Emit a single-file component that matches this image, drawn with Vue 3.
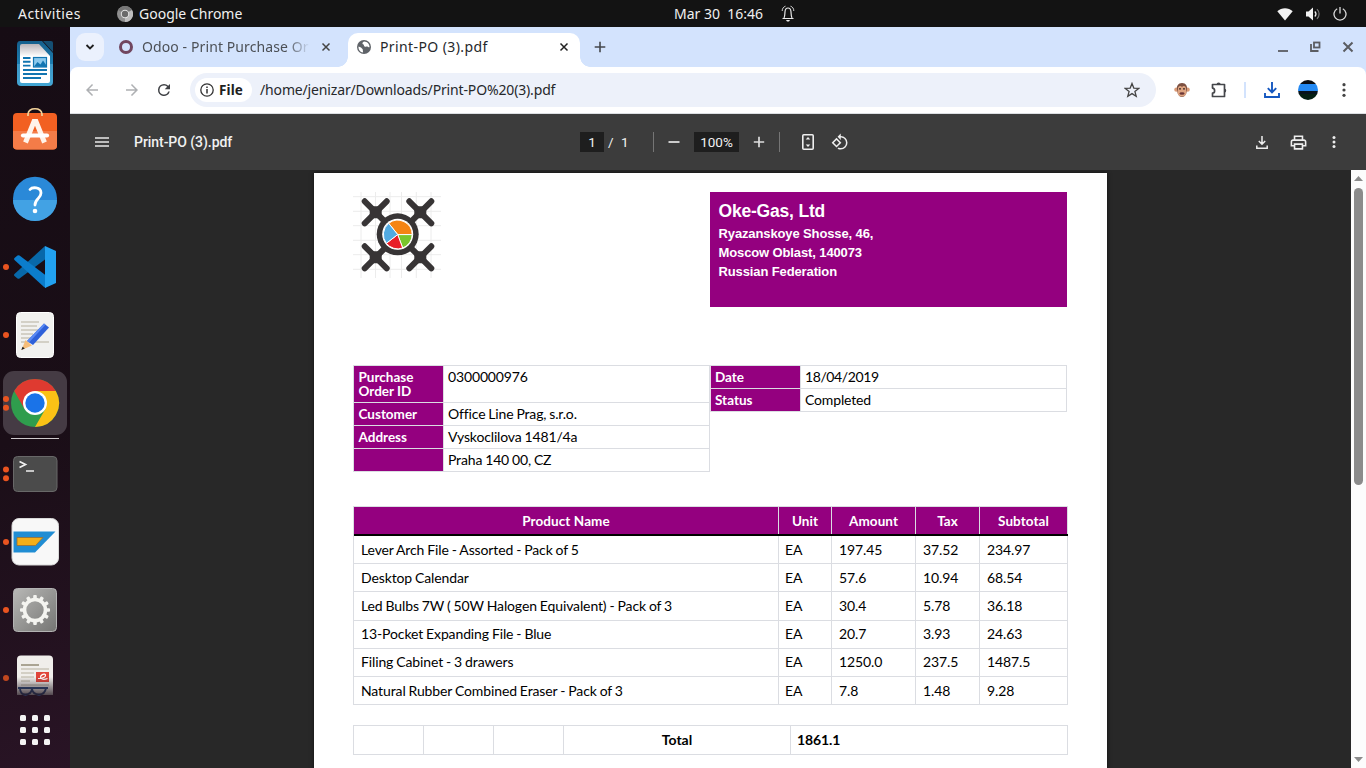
<script setup>
const orderInfo = [
  { label: 'Purchase Order ID', value: '0300000976', tall: true },
  { label: 'Customer', value: 'Office Line Prag, s.r.o.' },
  { label: 'Address', value: 'Vyskoclilova 1481/4a' },
  { label: '', value: 'Praha 140 00, CZ' },
]
const statusInfo = [
  { label: 'Date', value: '18/04/2019', date: true },
  { label: 'Status', value: 'Completed' },
]
const columns = ['Product Name', 'Unit', 'Amount', 'Tax', 'Subtotal']
const products = [
  ['Lever Arch File - Assorted - Pack of 5', 'EA', '197.45', '37.52', '234.97'],
  ['Desktop Calendar', 'EA', '57.6', '10.94', '68.54'],
  ['Led Bulbs 7W ( 50W Halogen Equivalent) - Pack of 3', 'EA', '30.4', '5.78', '36.18'],
  ['13-Pocket Expanding File - Blue', 'EA', '20.7', '3.93', '24.63'],
  ['Filing Cabinet - 3 drawers', 'EA', '1250.0', '237.5', '1487.5'],
  ['Natural Rubber Combined Eraser - Pack of 3', 'EA', '7.8', '1.48', '9.28'],
]
const gearTeeth = Array.from({ length: 12 }, (_, i) => i * 30)
</script>

<template>
  <div class="desktop">
    <header class="topbar">
      <span class="activities">Activities</span>
      <svg class="top-chrome" width="16" height="16" viewBox="0 0 16 16">
        <circle cx="8" cy="8" r="8" fill="#8f8f8f" />
        <path d="M8 8 1.100 4A8 8 0 0 1 15 4Z" fill="#777" />
        <path d="M8 8 15 4A8 8 0 0 1 8 16Z" fill="#bdbdbd" />
        <circle cx="8" cy="8" r="4.200" fill="#e4e4e4" />
        <circle cx="8" cy="8" r="3.200" fill="#6a6a6a" />
      </svg>
      <span class="app-name">Google Chrome</span>
      <span class="clock">Mar 30&nbsp; 16:46</span>
      <svg class="bell" width="14" height="17" viewBox="0 0 14 17" fill="none" stroke="#e8e8e8">
        <path d="M1.500 13.500h11M3 13c1-2 .8-4 1-6.300C4.200 4.200 5.300 3 7 3s2.800 1.200 3 3.700c.2 2.300 0 4.300 1 6.300" stroke-width="1.200" />
        <path d="M4.500 1.200C2.500 1.800 1.200 3.500 1.200 6M9.500 1.200c2 .6 3.300 2.300 3.300 4.800" stroke-width=".9" />
        <path d="M5 15h4l-1 1.500H6Z" fill="#eee" stroke="none" />
      </svg>
      <svg class="wifi" width="16" height="14" viewBox="0 0 16 14">
        <path d="M8 13.500.3 4.300C4.600.2 11.400.2 15.700 4.300Z" fill="#f2f2f2" />
      </svg>
      <svg class="volume" width="16" height="14" viewBox="0 0 16 14" fill="none">
        <path d="M1 4.500h2.500L8 .5v13L3.500 9.500H1Z" fill="#f2f2f2" />
        <path d="M9.800 4.500c1.300 1.400 1.300 3.600 0 5" stroke="#f2f2f2" stroke-width="1.300" />
        <path d="M12 2.200c2.800 2.800 2.800 6.800 0 9.600" stroke="#777" stroke-width="1.200" />
      </svg>
      <svg class="power" width="14" height="14" viewBox="0 0 14 14" fill="none" stroke="#dcdcdc" stroke-width="1.300">
        <path d="M4.200 1.800a6 6 0 1 0 5.600 0M7 0v6.500" />
      </svg>
    </header>

    <div class="body">
      <aside class="dock">
        <svg class="slot" viewBox="0 0 70 68">
          <defs>
            <linearGradient id="wr" x1="0" y1="0" x2="0" y2="1"><stop offset="0" stop-color="#155f8c" /><stop offset=".5" stop-color="#1d7db0" /><stop offset=".51" stop-color="#3d97c6" /><stop offset="1" stop-color="#43a6d4" /></linearGradient>
            <linearGradient id="wp" x1="0" y1="0" x2="0" y2="1"><stop offset="0" stop-color="#b9b4b9" /><stop offset=".32" stop-color="#fff" /></linearGradient>
          </defs>
          <path d="M20 12h22l11 12v29q0 4-4 4H21q-4 0-4-4V16q0-4 3-4Z" fill="url(#wr)" />
          <path d="M43 12h8q2 0 2 2v9Z" fill="#154f73" />
          <path d="M22 15h17l11 12v25q0 2-2 2H22q-2 0-2-2V17q0-2 2-2Z" fill="url(#wp)" />
          <path d="M23 29h7.500M23 32.800h7.500M23 36.600h7.500M23 41h24M23 45h24M23 49h18" stroke="#1275b1" stroke-width="1.900" />
          <rect x="33.500" y="28.500" width="13" height="9.500" fill="#8bc9ed" stroke="#1275b1" stroke-width="1.200" />
          <path d="m34 37.500 3.500-4.500 3 2.500 2.500-4 3.500 5v1.500Z" fill="#1275b1" />
        </svg>
        <svg class="slot" viewBox="0 0 70 68">
          <rect x="13" y="16" width="44" height="36.500" rx="4" fill="#f26022" />
          <path d="M13 34h44v14.500q0 4-4 4H17q-4 0-4-4Z" fill="#f47c48" />
          <path d="M28 19v-2c1-7 13-7 14 0v2" fill="none" stroke="#f4d49b" stroke-width="1.700" />
          <path d="m25.500 45.500 8.500-21h2l8.500 21" fill="none" stroke="#fff3ea" stroke-width="5" />
          <path d="M23 38.500h24" stroke="#fff" stroke-width="4.200" stroke-linecap="round" />
        </svg>
        <svg class="slot" viewBox="0 0 70 68">
          <circle cx="35" cy="33.700" r="22" fill="#2a89d8" />
          <path d="M13 35a22 21 0 0 0 44 0Z" fill="#42a2e4" />
          <path d="M30 24.500c2-2.500 11-3 11 3.500 0 5.500-6 5.500-6 12" fill="none" stroke="#fff" stroke-width="2.800" stroke-linecap="round" />
          <circle cx="35" cy="46" r="2.300" fill="#fff" />
        </svg>
        <svg class="slot" viewBox="0 0 70 68">
          <circle cx="6" cy="34" r="3" fill="#e95420" />
          <path d="M45 13 14.500 41q-1 1 0 2l3 2.500q1 .7 2 0L45 26.500Z" fill="#0868a9" />
          <path d="M14.500 27q-1-1 0-2l3-2.500q1-.7 2 0L46 42.500V55L44 54Z" fill="#0b7dcc" />
          <path d="M45 13 56 18v32l-11 5Z" fill="#22a1f0" />
        </svg>
        <svg class="slot" viewBox="0 0 70 68">
          <circle cx="6" cy="34" r="3" fill="#e95420" />
          <rect x="16.500" y="11.500" width="37" height="45" rx="4" fill="#f1f1ef" stroke="#fff" />
          <path d="M21 21h18M21 25h16M21 29h18M21 33h12M21 37h14M21 41h28" stroke="#c9c5b9" stroke-width="1.700" />
          <path d="m27 40 17-17.500 5 4L33 44Z" fill="#2e60d9" />
          <path d="m27 40 17-17.500 1.500 1.200L29 41.500Z" fill="#5a8af4" />
          <path d="m21.500 49 4-10 6.500 5.500Z" fill="#f6bd79" />
          <path d="m21.300 49 1.300-3.300 2.200 1.700Z" fill="#222" />
        </svg>
        <svg class="slot" viewBox="0 0 70 68">
          <rect x="3" y="2" width="64" height="64" rx="11" fill="#453b44" />
          <circle cx="6" cy="30" r="3" fill="#e95420" /><circle cx="6" cy="38.700" r="3" fill="#e95420" />
          <circle cx="35" cy="34" r="24" fill="#2f9d4d" />
          <path d="M14.200 22A24 24 0 0 1 55.800 22H35L24.600 40Z" fill="#df3a30" />
          <path d="M55.800 22A24 24 0 0 1 35 58L45.400 40 35 22Z" fill="#fbc116" />
          <circle cx="35" cy="34" r="12" fill="#fff" /><circle cx="35" cy="34" r="9.700" fill="#1a73e8" />
        </svg>
        <div class="dock-line"></div>
        <svg class="slot" viewBox="0 0 70 68">
          <circle cx="6" cy="29.500" r="3" fill="#e95420" /><circle cx="6" cy="38.300" r="3" fill="#e95420" />
          <rect x="13.500" y="16.500" width="43.500" height="35" rx="4" fill="#4b4b4b" stroke="#686868" />
          <path d="m19.500 21.500 6 3-6 3M26 31h8" fill="none" stroke="#f0f0f0" stroke-width="1.700" />
        </svg>
        <svg class="slot" viewBox="0 0 70 68">
          <circle cx="6" cy="34" r="3" fill="#e95420" />
          <rect x="12" y="10.500" width="46.500" height="46.500" rx="7" fill="#f8f8f8" stroke="#d8d8d8" />
          <path d="M13.500 23.500h42L35 44.500H13.500Z" fill="#208dd3" />
          <path d="M17 29.500h26l-7.500 8H17Z" fill="#f4ae18" stroke="#996f32" stroke-width=".8" />
        </svg>
        <svg class="slot" viewBox="0 0 70 68">
          <defs><linearGradient id="se" x1="0" y1="0" x2="1" y2="1"><stop offset="0" stop-color="#b8b8b6" /><stop offset="1" stop-color="#757573" /></linearGradient></defs>
          <circle cx="6" cy="34" r="3" fill="#e95420" />
          <rect x="13.500" y="12.500" width="43" height="43" rx="4" fill="url(#se)" stroke="#b3b3b3" />
          <rect v-for="a in gearTeeth" :key="a" x="33.200" y="19" width="3.600" height="5" rx="1" fill="#f4f4f0" :transform="`rotate(${a} 35 34)`" />
          <circle cx="35" cy="34" r="10.500" fill="none" stroke="#f4f4f0" stroke-width="3.600" />
        </svg>
        <svg class="slot" viewBox="0 0 70 68">
          <defs><linearGradient id="df" x1="0" y1="0" x2="0" y2="1"><stop offset="0" stop-color="#1e111b" stop-opacity="0" /><stop offset="1" stop-color="#1e111b" stop-opacity=".75" /></linearGradient></defs>
          <circle cx="6" cy="34" r="3" fill="#c1481f" />
          <path d="M17 51V15.500q0-4 4-4h28q4 0 4 4V51Z" fill="#f0eeeb" />
          <path d="M21 21h18" stroke="#aaa493" stroke-width="2" />
          <path d="M21 25h28M21 29h13M21 33h13M21 37h9M21 41h28" stroke="#c9c5b9" stroke-width="1.700" />
          <rect x="36" y="28" width="13" height="10" fill="#e0453b" />
          <path d="M38 34.500c5 0 8-1.500 7.500-3.500s-5-.5-5 2 3.500 3 7 1.500" fill="none" stroke="#fff" stroke-width="1.200" />
          <path d="M18 44h30M20 44q0 6.500 5.500 6.500t6.500-5.500q1 5.500 7 5.500t7-6.500" fill="none" stroke="#304f83" stroke-width="1.800" />
          <rect x="17" y="33" width="36" height="18" fill="url(#df)" />
        </svg>
        <div class="apps"><i v-for="n in 9" :key="n"></i></div>
      </aside>

      <main class="browser">
        <div class="tabs">
          <div class="tab-search">
            <svg width="10" height="8" viewBox="0 0 10 8"><path d="m1.500 2 3.500 3.500L8.500 2" fill="none" stroke="#1f1f1f" stroke-width="1.800" /></svg>
          </div>
          <div class="tab idle">
            <span class="ring"></span>
            <span class="tab-title">Odoo - Print Purchase Or</span>
            <svg width="10" height="10" viewBox="0 0 10 10"><path d="m1.500 1.500 7 7m0-7-7 7" stroke="#444" stroke-width="1.500" /></svg>
          </div>
          <div class="tab active">
            <svg class="globe" width="14" height="14" viewBox="0 0 14 14">
              <circle cx="7" cy="7" r="7" fill="#5f6368" />
              <path d="M1.500 6.500 4 7.500l1.700 1.700.4 3.300C3 12.300 1.300 9.500 1.500 6.500ZM7 1.500c-1 1-1.800 1-1.500 2.200.5 1 1.700.5 1.500 2 .4 1.300 2 1 3.300.8 1 .5 1.200 1 2.200.8C12.800 4.500 10.500 1.500 7 1.500Z" fill="#fff" />
            </svg>
            <span class="tab-title">Print-PO (3).pdf</span>
            <svg width="10" height="10" viewBox="0 0 10 10"><path d="m1.500 1.500 7 7m0-7-7 7" stroke="#222" stroke-width="1.500" /></svg>
          </div>
          <svg class="new-tab" width="12" height="12" viewBox="0 0 12 12"><path d="M6 .7v10.600M.7 6h10.600" stroke="#45484d" stroke-width="1.600" /></svg>
          <svg class="win" width="106" height="12" viewBox="0 0 106 12" fill="none" stroke="#5b5d62" stroke-width="2">
            <path d="M3 10h10" stroke-width="1.800" />
            <path d="M36 3v7h7.500" stroke-width="1.800" />
            <rect x="39" y="1.500" width="5.500" height="5" stroke-width="1.800" />
            <path d="m68.500 1.500 9 9m0-9-9 9" stroke-width="2" />
          </svg>
        </div>

        <div class="toolbar">
          <svg class="back" width="18" height="18" viewBox="0 0 24 24"><path d="M20 11H7.830l5.590-5.590L12 4l-8 8 8 8 1.410-1.410L7.830 13H20v-2z" fill="#aeb0b3" /></svg>
          <svg class="fwd" width="18" height="18" viewBox="0 0 24 24"><path d="m12 4-1.410 1.410L16.170 11H4v2h12.170l-5.580 5.590L12 20l8-8z" fill="#aeb0b3" /></svg>
          <svg class="reload" width="18" height="18" viewBox="0 0 24 24"><path d="M17.650 6.350A7.950 7.950 0 0 0 12 4a8 8 0 1 0 7.730 10h-2.080A6 6 0 1 1 12 6c1.660 0 3.140.69 4.220 1.780L13 11h7V4z" fill="#3f4145" /></svg>
          <div class="omnibox">
            <div class="chip">
              <svg width="14" height="14" viewBox="0 0 14 14"><circle cx="7" cy="7" r="6.200" fill="none" stroke="#333" stroke-width="1.300" /><path d="M7 6v4.500M7 3.500V5" stroke="#333" stroke-width="1.500" /></svg>
              <b>File</b>
            </div>
            <span class="url">/home/jenizar/Downloads/Print-PO%20(3).pdf</span>
            <svg width="16" height="16" viewBox="0 0 16 16"><path d="m8 1.500 1.800 4.600 4.900.3-3.800 3.100 1.300 4.700L8 11.600l-4.200 2.600 1.300-4.700L1.300 6.400l4.900-.3Z" fill="none" stroke="#444" stroke-width="1.300" /></svg>
          </div>
          <svg class="monkey" width="16" height="16" viewBox="0 0 16 16">
            <circle cx="2.300" cy="7.700" r="2.100" fill="#d99a76" /><circle cx="13.700" cy="7.700" r="2.100" fill="#d99a76" />
            <path d="M8 1c4 0 5.500 3 5 6.500-.2 4-2 7.500-5 7.500s-4.800-3.500-5-7.500C2.500 4 4 1 8 1Z" fill="#7d5142" />
            <path d="M8 5c1.500-1.800 4-1 4 1.500 0 2 .8 3 .3 5C11.800 13.500 10 14.500 8 14.500s-3.800-1-4.300-3c-.5-2 .3-3 .3-5C4 4 6.500 3.200 8 5Z" fill="#dfa582" />
            <circle cx="6" cy="6.800" r=".9" fill="#2c2020" /><circle cx="10" cy="6.800" r=".9" fill="#2c2020" />
            <ellipse cx="8" cy="11.500" rx="2.600" ry="1.300" fill="#6d3737" />
          </svg>
          <svg class="puzzle" width="18" height="18" viewBox="0 0 18 18">
            <path d="M2.500 3.500h12v12h-12v-3.300c2.800-.2 2.800-4.900 0-5.100Z" fill="none" stroke="#45474b" stroke-width="1.700" stroke-linejoin="round" />
            <path d="M6.500 3.500a2.100 2.100 0 0 1 4.200 0ZM14.500 7.400a2.200 2.200 0 0 1 0 4.300Z" fill="#45474b" />
          </svg>
          <span class="bar-sep"></span>
          <svg class="dl-blue" width="16" height="16" viewBox="0 0 16 16" fill="none" stroke="#1558c0" stroke-width="1.900"><path d="M8 0v10M3.800 6.200 8 10.400l4.200-4.200M1 11v4h14v-4" /></svg>
          <span class="avatar"></span>
          <svg class="dots" width="4" height="14" viewBox="0 0 4 14" fill="#444"><circle cx="2" cy="1.700" r="1.600" /><circle cx="2" cy="7" r="1.600" /><circle cx="2" cy="12.300" r="1.600" /></svg>
        </div>

        <div class="pdfbar">
          <svg class="burger" width="14" height="10" viewBox="0 0 14 10"><path d="M0 1h14M0 5h14M0 9h14" stroke="#e8e8e8" stroke-width="1.500" /></svg>
          <span class="doc-title">Print-PO (3).pdf</span>
          <span class="page-box">1</span>
          <span class="slash">/</span>
          <span class="page-count">1</span>
          <span class="vsep"></span>
          <svg class="minus" width="12" height="12" viewBox="0 0 12 12"><path d="M.5 6h11" stroke="#ddd" stroke-width="1.800" /></svg>
          <span class="zoom-box">100%</span>
          <svg class="plus" width="12" height="12" viewBox="0 0 12 12"><path d="M.8 6h10.400M6 .8v10.400" stroke="#ddd" stroke-width="1.700" /></svg>
          <span class="vsep second"></span>
          <svg class="fit" width="12" height="16" viewBox="0 0 12 16"><rect x=".8" y=".8" width="10.400" height="14.400" rx="1" fill="none" stroke="#eee" stroke-width="1.600" /><path d="m6 3 2.300 2.500H3.700ZM6 13l2.300-2.500H3.700Z" fill="#eee" /></svg>
          <svg class="rotate" width="18" height="18" viewBox="0 0 24 24"><path d="M7.340 6.410.86 12.900l6.490 6.480 6.490-6.480-6.500-6.490zM3.690 12.900l3.660-3.660L11 12.900l-3.660 3.660-3.650-3.660zm15.670-6.260A8.950 8.950 0 0 0 13 4V.760L8.760 5 13 9.240V6c1.790 0 3.580.68 4.950 2.050a7.007 7.007 0 0 1 0 9.900 6.973 6.973 0 0 1-7.790 1.440l-1.490 1.490C10.020 21.620 11.510 22 13 22c2.300 0 4.610-.88 6.360-2.640a8.980 8.980 0 0 0 0-12.720z" fill="#eee" /></svg>
          <svg class="save" width="12" height="13" viewBox="0 0 12 13" fill="none" stroke="#eee" stroke-width="1.500"><path d="M6 0v8M2.800 5 6 8.200 9.200 5M.8 9.500v2.700h10.400V9.500" /></svg>
          <svg class="print" width="19" height="19" viewBox="0 0 24 24"><path d="M19 8h-1V3H6v5H5c-1.660 0-3 1.340-3 3v6h4v4h12v-4h4v-6c0-1.660-1.340-3-3-3zM8 5h8v3H8V5zm8 12v2H8v-4h8v2zm2-2v-2H6v2H4v-4c0-.55.45-1 1-1h14c.55 0 1 .45 1 1v4h-2z" fill="#eee" /></svg>
          <svg class="pdots" width="4" height="12" viewBox="0 0 4 12" fill="#eee"><circle cx="2" cy="1.500" r="1.500" /><circle cx="2" cy="6" r="1.500" /><circle cx="2" cy="10.500" r="1.500" /></svg>
        </div>

        <div class="viewer">
          <article class="page">
            <div class="letterhead">
              <svg class="logo" width="88" height="86" viewBox="0 0 88 86">
                <path d="M8 0v86M22.500 0v86M37 0v86M48.500 0v86M63.300 0v86M78 0v86M0 4.700h88M0 19.300h88M0 33.700h88M0 48.300h88M0 62.700h88M0 77.300h88" stroke="#ececec" stroke-width="1" />
                <path d="M11.700 9.300l22 22m0-22-22 22M56.300 9.300l22 22m0-22-22 22M11.700 54.300l22 22m0-22-22 22M56.300 54.300l22 22m0-22-22 22M22.700 20.300l44.600 45M67.300 20.300l-44.600 45" stroke="#373435" stroke-width="6" stroke-linecap="round" />
                <path d="M16.700 14.300h12v12h-12ZM61.300 14.300h12v12h-12ZM16.700 59.300h12v12h-12ZM61.300 59.300h12v12h-12Z" fill="#373435" />
                <circle cx="44.700" cy="42.300" r="21" fill="#373435" /><circle cx="44.700" cy="42.300" r="15.500" fill="#fff" />
                <g stroke="#fff" stroke-width="1">
                  <path d="M44.700 42.600 35.700 31.300A14.500 14.500 0 0 1 59.200 42.600Z" fill="#f58413" />
                  <path d="M44.700 42.600H59.200A14.500 14.500 0 0 1 49.700 56Z" fill="#7ac62c" />
                  <path d="M44.700 42.600 49.700 56A14.500 14.500 0 0 1 33.300 51.300Z" fill="#e81e28" />
                  <path d="M44.700 42.600 33.300 51.300A14.500 14.500 0 0 1 35.700 31.300Z" fill="#51aae2" />
                </g>
              </svg>
              <div class="company">
                <h1>Oke-Gas, Ltd</h1>
                <p>Ryazanskoye Shosse, 46,</p>
                <p>Moscow Oblast, 140073</p>
                <p>Russian Federation</p>
              </div>
            </div>

            <div class="info">
              <div class="info-table">
                <div v-for="(r, i) in orderInfo" :key="i" class="info-row" :class="{ tall: r.tall }">
                  <b>{{ r.label }}</b><span>{{ r.value }}</span>
                </div>
              </div>
              <div class="info-table right">
                <div v-for="r in statusInfo" :key="r.label" class="info-row" :class="{ date: r.date }">
                  <b>{{ r.label }}</b><span>{{ r.value }}</span>
                </div>
              </div>
            </div>

            <div class="products">
              <div class="prow head"><span v-for="c in columns" :key="c">{{ c }}</span></div>
              <div v-for="r in products" :key="r[0]" class="prow item">
                <span v-for="(c, i) in r" :key="i">{{ c }}</span>
              </div>
            </div>

            <div class="total">
              <span></span><span></span><span></span><span class="t-label">Total</span><span class="t-value">1861.1</span>
            </div>
          </article>
          <div class="scroll">
            <svg width="9" height="5" viewBox="0 0 9 5"><path d="M4.500 0 9 5H0Z" fill="#8b8b8b" /></svg>
            <div class="thumb"></div>
            <svg class="down" width="9" height="5" viewBox="0 0 9 5"><path d="M4.500 5 9 0H0Z" fill="#8b8b8b" /></svg>
          </div>
        </div>
      </main>
    </div>
  </div>
</template>

<style>
html, body { margin: 0; overflow: hidden; }
</style>

<style scoped>
* { box-sizing: border-box; }
svg { display: block; flex: none; }
span, b { white-space: nowrap; }
.desktop { width: 1366px; height: 768px; overflow: hidden; display: flex; flex-direction: column; font-family: "Noto Sans", "Open Sans", sans-serif; font-size: 14px; }
.topbar { height: 27px; flex: none; display: flex; align-items: center; background: #131313; color: #f0f0f0; padding-left: 18px; }
.topbar span { line-height: 26px; }
.activities { width: 99px; letter-spacing: .45px; }
.app-name { width: 535px; padding-left: 6px; }
.clock { width: 107px; margin-left: 6px; }
.topbar .wifi { margin-left: 482px; }
.volume { margin-left: 12px; }
.power { margin-left: 12px; }

.body { flex: 1; display: flex; min-height: 0; }
.dock { width: 70px; flex: none; padding-top: 2px; background: linear-gradient(165deg, #160c14 0%, #1a0e17 55%, #291425 100%); display: flex; flex-direction: column; }
.slot { width: 70px; height: 68px; }
.dock-line { height: 1px; width: 48px; margin: 1px 11px; background: #cdc9cc; flex: none; }
.apps { display: grid; grid-template-columns: repeat(3, 6px); gap: 6px; margin: 3px 0 0 20px; }
.apps i { width: 6px; height: 6px; border-radius: 1.5px; background: #f4f4f4; }

.browser { flex: 1; min-width: 0; display: flex; flex-direction: column; background: #d3e3fd; }
.tabs { height: 40px; flex: none; display: flex; align-items: center; padding-left: 6px; background: #d3e3fd; }
.tab-search { width: 28px; height: 28px; flex: none; border-radius: 9px; background: #ebf1fd; display: flex; align-items: center; justify-content: center; }
.tab { display: flex; align-items: center; flex: none; }
.tab.idle { width: 244px; padding-left: 15px; color: #4c5056; }
.ring { width: 14px; height: 14px; flex: none; border: 3px solid #71465f; border-radius: 50%; }
.tab-title { margin-left: 9px; width: 170px; flex: none; line-height: 24px; letter-spacing: .4px; }
.idle .tab-title { letter-spacing: .1px; -webkit-mask-image: linear-gradient(90deg, #000 145px, transparent 168px); mask-image: linear-gradient(90deg, #000 145px, transparent 168px); }
.idle svg { margin-left: 9px; }
.tab.active { position: relative; width: 232px; height: 34px; align-self: flex-end; background: #fff; border-radius: 10px 10px 0 0; padding: 0 0 6px 9px; color: #26282b; }
.active::before, .active::after { content: ""; position: absolute; bottom: 0; width: 10px; height: 10px; }
.active::before { left: -10px; background: radial-gradient(circle at 0 0, transparent 9.5px, #fff 10px); }
.active::after { right: -10px; background: radial-gradient(circle at 100% 0, transparent 9.5px, #fff 10px); }
.active svg:last-child { margin-left: 9px; }
.new-tab { margin-left: 14px; }
.win { margin-left: 669px; }

.toolbar { height: 47px; flex: none; display: flex; align-items: center; background: #fff; border-bottom: 1px solid #dcdfe3; border-radius: 8px 8px 0 0; padding-left: 13px; }
.fwd { margin-left: 22px; }
.reload { margin-left: 14px; }
.omnibox { width: 966px; height: 34px; flex: none; margin-left: 17px; border-radius: 17px; background: #edf1fa; display: flex; align-items: center; padding-left: 5px; }
.chip { width: 57px; height: 24px; border-radius: 12px; background: #fff; display: flex; align-items: center; padding-left: 5px; gap: 5px; color: #1f1f1f; }
.chip b { font-size: 13.500px; font-weight: 700; letter-spacing: .1px; }
.url { width: 859px; margin: 0 0 2px 8px; color: #26282b; letter-spacing: -.15px; }
.omnibox > svg { margin-left: 5px; }
.monkey { margin-left: 18px; }
.puzzle { margin-left: 20px; }
.bar-sep { width: 2px; height: 16px; margin-left: 16px; background: #d3e3fd; }
.dl-blue { margin-left: 18px; }
.avatar { width: 20px; height: 20px; border-radius: 50%; margin-left: 18px; background: linear-gradient(#0a0d12 0 4px, #2489f2 4px 11px, #07131c 11px 14px, #052013 14px); }
.dots { margin-left: 24px; }

.pdfbar { height: 56px; flex: none; display: flex; align-items: center; background: #3c3c3c; color: #f1f1f1; font-family: Roboto, sans-serif; padding-left: 25px; }
.doc-title { width: 446px; margin-left: 25px; font-weight: 500; letter-spacing: -.05px; }
.page-box { width: 24px; height: 20px; line-height: 20px; text-align: center; background: #1e1e1e; font-size: 13.500px; }
.slash { width: 13px; margin-left: 4px; font-size: 13.500px; }
.page-count { width: 32px; font-size: 13.500px; }
.vsep { width: 1px; height: 20px; background: #757575; }
.minus { margin-left: 14px; }
.zoom-box { width: 45px; height: 20px; line-height: 20px; margin-left: 14px; text-align: center; background: #1e1e1e; font-size: 13.500px; }
.plus { margin-left: 14px; }
.second { margin-left: 14px; }
.fit { margin-left: 22px; }
.rotate { margin-left: 17px; }
.save { margin-left: 407px; }
.print { margin-left: 20.500px; }
.pdots { margin-left: 24.500px; }

.viewer { flex: 1; min-height: 0; display: flex; background: #282828; overflow: hidden; }
.page { width: 793px; height: 900px; flex: none; margin: 3px 0 0 244px; padding: 19px 39px; background: #fff; box-shadow: 0 0 4px #111; color: #000; font-family: Lato, sans-serif; font-size: 14px; }
.letterhead { display: flex; justify-content: space-between; height: 115px; padding-right: 1px; }
.company { width: 357px; height: 115px; padding: 9px 8.500px; background: #94007f; color: #fff; font-family: "Liberation Sans", Arial, sans-serif; }
.company h1 { font-size: 17.500px; line-height: 20px; margin: 0 0 3px; font-weight: 700; letter-spacing: -.2px; }
.company p { font-size: 13px; line-height: 19px; margin: 0; font-weight: 700; letter-spacing: -.12px; }
.info { display: flex; height: 107px; margin-top: 58px; align-items: flex-start; }
.info-table { width: 357px; border: 1px solid #dbdde2; border-bottom: 0; }
.info-table.right { border-left-color: #e6dbe6; }
.info-row { display: grid; grid-template-columns: 90px 1fr; height: 23px; border-bottom: 1px solid #dbdde2; }
.info-row.tall { height: 37px; }
.info-row b { background: #94007f; color: #fff; border-right: 1px solid #dbdde2; padding: 4px 0 0 4.500px; line-height: 14px; font-size: 13.500px; white-space: normal; }
.right .info-row b { padding-left: 4px; }
.info-row span { padding: 3px 0 0 4px; line-height: 16px; letter-spacing: -.15px; word-spacing: -.5px; }
.info-row.date span { letter-spacing: -.4px; }
.products { margin-top: 34px; border-left: 1px solid #dbdde2; border-top: 1px solid #dbdde2; }
.prow { display: grid; grid-template-columns: 425px 53px 84px 64px 88px; }
.prow span { border-right: 1px solid #dbdde2; border-bottom: 1px solid #dbdde2; height: 28px; line-height: 27px; padding-left: 7px; }
.item span { letter-spacing: -.12px; word-spacing: -.5px; }
.item:nth-child(4) span { height: 29px; }
.item:nth-child(5) span, .item:nth-child(6) span { line-height: 25px; }
.prow span:nth-child(2) { padding-left: 6px; }
.prow.head { background: #94007f; color: #fff; font-weight: 700; border-bottom: 2px solid #000; font-size: 13.500px; letter-spacing: .08px; }
.prow.head span { text-align: center; padding: 0; height: 27px; line-height: 28px; border-bottom: 0; }
.total { margin-top: 20px; height: 30px; display: grid; grid-template-columns: 70px 70px 70px 227px 277px; border: 1px solid #dbdde2; border-right: 0; font-weight: 700; line-height: 28px; }
.total span { border-right: 1px solid #dbdde2; }
.t-label { text-align: center; }
.t-value { padding-left: 6px; letter-spacing: -.1px; }
.scroll { width: 15px; margin-left: auto; background: #fcfcfc; display: flex; flex-direction: column; align-items: center; padding: 6px 0; }
.thumb { width: 9px; height: 297px; margin-top: 7px; border-radius: 5px; background: #8b8b8b; }
.down { margin-top: auto; }
</style>
